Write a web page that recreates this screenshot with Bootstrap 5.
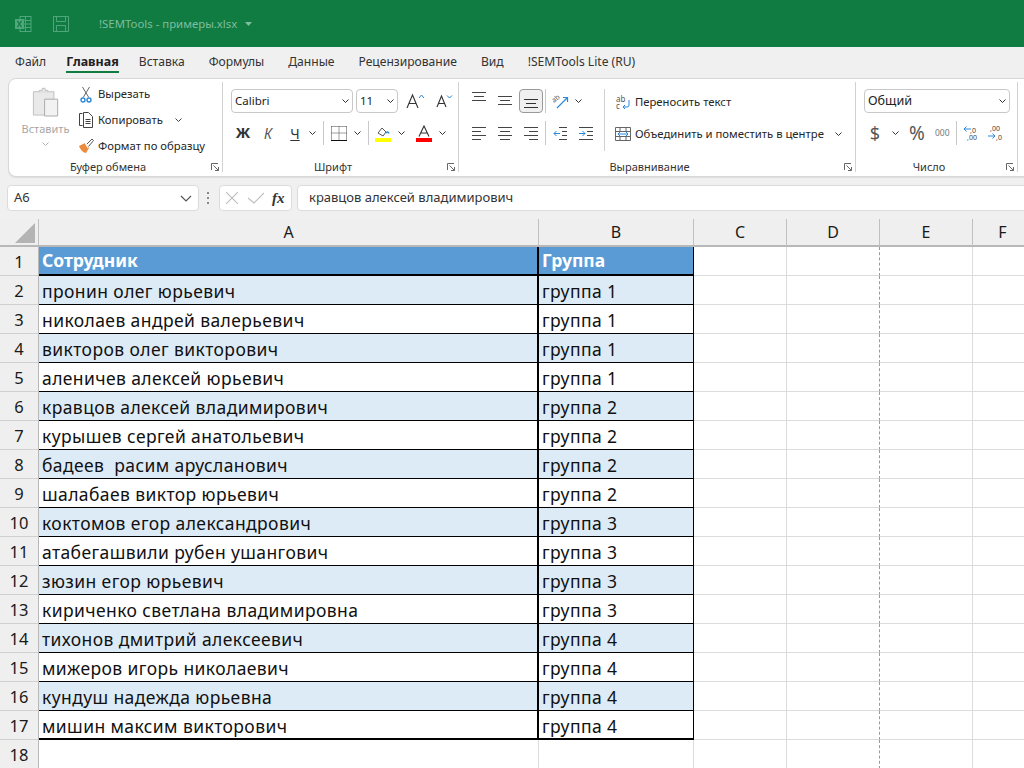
<!DOCTYPE html>
<html lang="ru">
<head>
<meta charset="utf-8">
<title>!SEMTools - примеры.xlsx</title>
<link href="https://cdn.jsdelivr.net/npm/bootstrap@5.3.0/dist/css/bootstrap.min.css" rel="stylesheet">
<style>
html,body{height:768px;overflow:hidden;background:#f0f0f0;margin:0}
body{font-family:"Noto Sans","Liberation Sans",sans-serif;font-size:11.5px;color:#262626;width:1024px}
svg{display:block;flex:none}
.xl-title{height:47px;background:#107c41;color:#7fbda0;padding-left:15px;font-size:11.4px}
.xl-tabs{height:31px;padding-left:15px;gap:21px;font-size:12.1px;color:#333}
.xl-tab{height:26px;line-height:30px;white-space:nowrap}
.xl-tab-far{margin-left:3px}
.xl-tab-on{font-weight:700;font-size:12.5px;color:#222;border-bottom:2px solid #107c41;margin:0 -1px -1px -1px}
.xl-ribbon{height:99px;width:1040px;margin-left:8px;background:#fff;border:1px solid #d8d8d8;border-radius:8px 0 0 8px;box-shadow:0 1px 1px #ddd}
.xl-group{position:relative;height:90px;margin-top:3px;border-right:1px solid #d2d2d2;flex:none}
.xl-label{position:absolute;left:0;right:15px;bottom:-2px;text-align:center;font-size:11px;line-height:14px;color:#333}
.xl-launch{position:absolute;right:3px;bottom:1px}
.xl-rowbtn{height:26px;white-space:nowrap;font-size:11.3px}
.xl-combo{height:24px;border:1px solid #c8c8c8;border-radius:4px;background:#fff;padding:0 3px;font-size:11.5px;color:#222}
.xl-combo-wide{font-size:12.6px}
.xl-sep{width:1px;height:24px;background:#c8c8c8;flex:none}
.xl-faint{color:#a6a6a6}
.xl-fbar{height:42px;padding:8px 0 0 7px;gap:6px}
.xl-box{height:26px;background:#fff;border:1px solid #dcdcdc;border-radius:4px;font-size:13px;color:#333}
.xl-sheet{display:grid;grid-template-columns:39px 500px 155px 93px 93px 93px 60px;grid-template-rows:28px;grid-auto-rows:29px;height:550px;background:#fff;font-size:17.500px;color:#111;letter-spacing:.4px}
.xl-h{background:#efefef;border-right:1px solid #c0c0c0;border-bottom:2px solid #b8b8b8;display:flex;align-items:center;justify-content:center;font-size:16px;color:#1a1a1a;letter-spacing:0}
.xl-n{background:#efefef;border-right:1px solid #b8b8b8;border-bottom:1px solid #d0d0d0;display:flex;align-items:center;justify-content:center;font-size:16.500px;color:#1a1a1a;padding-top:2px;letter-spacing:0}
.xl-c{border-right:1px solid #dcdcdc;border-bottom:1px solid #dcdcdc;padding:3px 0 0 3px;white-space:nowrap;line-height:24px;overflow:hidden}
.xl-d{border-right:1px dashed #9a9a9a}
.xl-a{border-right:2px solid #000;border-bottom:1px solid #000}
.xl-b{border-right:1px solid #000;border-bottom:1px solid #000}
.xl-s{background:#ddebf7}
.xl-top{background:#5b9bd5;color:#fff;font-weight:700;border-bottom:2px solid #000;line-height:22px;padding-top:2px;letter-spacing:0}
.xl-last{border-bottom:2px solid #000}
.xl-wrapcol{width:15px;height:16px;margin-right:4px;line-height:7px;font-size:8px;color:#555;position:relative;padding-top:1px}
.xl-wrapcol svg{position:absolute;left:0;top:0}
.xl-shift{padding-top:1px}
</style>
</head>
<body>
<div class="xl-title d-flex align-items-center">
  <svg width="17" height="16" viewBox="0 0 17 16" fill="none"><rect x="5" y=".5" width="11" height="15" fill="none" stroke="#4fa67c"/><path d="M5 4.500h11M5 8h11M5 11.500h11M10.500 .5v15" stroke="#4fa67c"/><rect y="3" width="9" height="10" fill="#4fa67c"/><path d="M2.500 5l4 6M6.500 5l-4 6" stroke="#107c41" stroke-width="1.300"/></svg>
  <svg style="margin-left:21px" width="16" height="16" viewBox="0 0 16 16" fill="none" stroke="#4fa67c"><path d="M.5.500h15v15H.5zM3.500.5v5h9v-5M3.500 15.500v-6h9v6"/></svg>
  <span style="margin-left:30px">!SEMTools - примеры.xlsx</span>
  <svg class="ms-2" width="7" height="4" viewBox="0 0 7 4"><path d="M0 0h7L3.500 4z" fill="#7fbda0"/></svg>
</div>
<div class="xl-tabs d-flex">
  <div class="xl-tab">Файл</div><div class="xl-tab xl-tab-on">Главная</div><div class="xl-tab">Вставка</div><div class="xl-tab xl-tab-far">Формулы</div><div class="xl-tab xl-tab-far">Данные</div><div class="xl-tab xl-tab-far">Рецензирование</div><div class="xl-tab xl-tab-far">Вид</div><div class="xl-tab xl-tab-far">!SEMTools Lite (RU)</div>
</div>
<div class="xl-ribbon d-flex">
  <div class="xl-group d-flex" style="width:214px">
    <div class="d-flex flex-column align-items-center xl-faint" style="width:69px;padding:5px 0 0 4px;font-size:11px">
      <svg width="28" height="30" viewBox="0 0 30 31" fill="none"><path d="M1.500 4.500h22v25h-22z" fill="#e9e9e9" stroke="#bdbdbd"/><path d="M8 4.500V3h3V.8h3V3h3v1.500" fill="#e9e9e9" stroke="#bdbdbd"/><path d="M13.500 12.500h14v18h-14z" fill="#f2f2f2" stroke="#a8a8a8"/></svg>
      <div style="margin-top:4px;line-height:16px">Вставить</div>
      <svg style="margin-top:5px" width="7" height="4" viewBox="0 0 7 4" fill="none" stroke="#b0b0b0"><path d="M.5.500l3 3 3-3"/></svg>
    </div>
    <div class="d-flex flex-column" style="margin-top:-1px">
      <div class="xl-rowbtn d-flex align-items-center"><svg width="12" height="17" style="margin:0 6px 0 2px" viewBox="0 0 12 17" fill="none"><path d="M2.500 1l6 10M9.500 1l-6 10" stroke="#666"/><circle cx="3" cy="14" r="2" stroke="#2b88d8" stroke-width="1.400"/><circle cx="9" cy="14" r="2" stroke="#2b88d8" stroke-width="1.400"/></svg>Вырезать</div>
      <div class="xl-rowbtn d-flex align-items-center"><svg width="16" height="16" style="margin-right:4px" viewBox="0 0 16 16" fill="none" stroke="#444"><path d="M4.500 1.500h-3v12h3M5.500 .5h5l4 4v11h-9zM7.500 7.500h5M7.500 9.500h5M7.500 11.500h5"/></svg>Копировать<svg style="margin-left:12px" width="7" height="4" viewBox="0 0 7 4" fill="none" stroke="#444"><path d="M.5.500l3 3 3-3"/></svg></div>
      <div class="xl-rowbtn d-flex align-items-center"><svg width="16" height="16" style="margin-right:4px" viewBox="0 0 16 16" fill="none"><path d="M1 8l6-3 4 5-3 5C5 15 2 11 1 8z" fill="#ed8b3d"/><path d="M7 5l3 5" stroke="#fff"/><path d="M9 6l5-5 1.500 1.500-5 6" fill="#fff" stroke="#555"/></svg>Формат по образцу</div>
    </div>
    <div class="xl-label">Буфер обмена</div>
    <svg class="xl-launch" width="8" height="8" viewBox="0 0 8 8" fill="none" stroke="#666"><path d="M.5 7V.5H7M2.500 2.500l5 5M7.500 4v3.500H4"/></svg>
  </div>
  <div class="xl-group" style="width:236px;padding:7px 0 0 8px">
    <div class="d-flex align-items-center" style="gap:3px">
      <div class="xl-combo d-flex align-items-center justify-content-between" style="width:122px">Calibri<svg width="7" height="4" viewBox="0 0 7 4" fill="none" stroke="#333"><path d="M.5.500l3 3 3-3"/></svg></div>
      <div class="xl-combo d-flex align-items-center justify-content-between" style="width:42px">11<svg width="7" height="4" viewBox="0 0 7 4" fill="none" stroke="#333"><path d="M.5.500l3 3 3-3"/></svg></div>
      <svg width="20" height="16" style="margin-left:5px" viewBox="0 0 20 16" fill="none"><path d="M1 15L6.500 2 12 15M3 10.500h7" stroke="#333" stroke-width="1.100"/><path d="M13 5l2.500-3L18 5" stroke="#2b88d8"/></svg>
      <svg width="18" height="14" style="margin-left:7px" viewBox="0 0 18 14" fill="none"><path d="M1 13L5.500 2 10 13M2.500 9.500h6" stroke="#333" stroke-width="1.100"/><path d="M11 1.500l2.500 2.500L16 1.500" stroke="#2b88d8"/></svg>
    </div>
    <div class="d-flex align-items-center" style="margin-top:8px;height:24px;font-size:14px;color:#333">
      <b style="width:24px;text-align:center;font-size:14.5px">Ж</b>
      <i style="width:26px;text-align:center;color:#555">К</i>
      <span style="width:28px;text-align:center;text-decoration:underline">Ч</span>
      <svg width="7" height="4" viewBox="0 0 7 4" fill="none" stroke="#333"><path d="M.5.500l3 3 3-3"/></svg>
      <div class="xl-sep" style="margin:0 7px"></div>
      <svg width="16" height="15" viewBox="0 0 16 15" fill="none"><path d="M.5.500h15M.5 7h15M.5.500v13M8 .5v13M15.500 .5v13" stroke="#444" stroke-dasharray="1 1"/><path d="M0 14.500h16" stroke="#111"/></svg>
      <svg style="margin-left:7px" width="7" height="4" viewBox="0 0 7 4" fill="none" stroke="#333"><path d="M.5.500l3 3 3-3"/></svg>
      <div class="xl-sep" style="margin:0 6px 0 7px"></div>
      <div style="width:16px"><svg width="16" height="17" viewBox="0 0 16 17" fill="none"><path d="M3 8l4-5 4 4-3 4z" stroke="#555"/><path d="M11 8c1-1 2-2 3 .5" stroke="#2b88d8" stroke-width="1.500"/><rect y="13" width="16" height="4" fill="#ff0"/></svg></div>
      <svg style="margin-left:7px" width="7" height="4" viewBox="0 0 7 4" fill="none" stroke="#333"><path d="M.5.500l3 3 3-3"/></svg>
      <div style="width:16px;margin-left:11px"><svg width="16" height="17" viewBox="0 0 16 17" fill="none"><path d="M3 11.500L8 1l5 10.500M4.500 8h7" stroke="#333" stroke-width="1.100"/><rect y="13" width="16" height="4" fill="#f00"/></svg></div>
      <svg style="margin-left:7px" width="7" height="4" viewBox="0 0 7 4" fill="none" stroke="#333"><path d="M.5.500l3 3 3-3"/></svg>
    </div>
    <div class="xl-label">Шрифт</div>
    <svg class="xl-launch" width="8" height="8" viewBox="0 0 8 8" fill="none" stroke="#666"><path d="M.5 7V.5H7M2.500 2.500l5 5M7.500 4v3.500H4"/></svg>
  </div>
  <div class="xl-group d-flex" style="width:397px;padding:7px 0 0 13px">
    <div style="width:132px">
      <div class="d-flex align-items-center" style="height:24px">
        <svg width="14" height="10" viewBox="0 0 14 10" fill="none" stroke="#444" style="margin-top:-8px"><path d="M0 .5h14M2 4.500h10M0 8.500h14"/></svg>
        <svg width="14" height="10" style="margin-left:12px" viewBox="0 0 14 10" fill="none" stroke="#444"><path d="M0 .5h14M2 4.500h10M0 8.500h14"/></svg>
        <div class="d-flex align-items-center justify-content-center" style="width:24px;height:24px;margin-left:7px;background:#f0f0f0;border:1px solid #999;border-radius:4px"><svg width="14" height="10" viewBox="0 0 14 10" fill="none" stroke="#333" style="margin-top:5px"><path d="M0 .5h14M2 4.500h10M0 8.500h14"/></svg></div>
        <div class="xl-sep" style="margin:0 6px 0 2px"></div>
        <svg width="18" height="18" viewBox="0 0 18 18" fill="none"><text transform="translate(2 11) rotate(-40)" font-size="7" fill="#555">ab</text><path d="M5 16L15 6M11 5.500h4.500V10" stroke="#2b88d8" stroke-width="1.200"/></svg>
        <svg style="margin-left:5px" width="7" height="4" viewBox="0 0 7 4" fill="none" stroke="#333"><path d="M.5.500l3 3 3-3"/></svg>
      </div>
      <div class="d-flex align-items-center" style="height:24px;margin-top:8px">
        <svg width="14" height="14" viewBox="0 0 14 14" fill="none" stroke="#444"><path d="M0 1.500h14M0 5.500h9M0 9.500h14M0 13.500h9"/></svg>
        <svg width="14" height="14" style="margin-left:12px" viewBox="0 0 14 14" fill="none" stroke="#444"><path d="M0 1.500h14M2 5.500h10M0 9.500h14M2 13.500h10"/></svg>
        <svg width="14" height="14" style="margin-left:12px" viewBox="0 0 14 14" fill="none" stroke="#444"><path d="M0 1.500h14M5 5.500h9M0 9.500h14M5 13.500h9"/></svg>
        <div class="xl-sep" style="margin:0 7px 0 7px"></div>
        <svg width="14" height="14" viewBox="0 0 14 14" fill="none"><path d="M6 1.500h8M9 5.500h5M9 9.500h5M6 13.500h8" stroke="#444"/><path d="M7 7.500H1M3.500 5l-2.500 2.500L3.500 10" stroke="#2b88d8"/></svg>
        <svg width="14" height="14" style="margin-left:12px" viewBox="0 0 14 14" fill="none"><path d="M0 1.500h14M8 5.500h6M8 9.500h6M0 13.500h14" stroke="#444"/><path d="M0 7.500h6M3.500 5L6 7.500 3.500 10" stroke="#2b88d8"/></svg>
      </div>
    </div>
    <div style="width:1px;height:62px;background:#d2d2d2"></div>
    <div style="margin-left:11px" class="xl-shift">
      <div class="xl-rowbtn d-flex align-items-center" style="height:24px"><div class="xl-wrapcol">ab<br>c<svg width="15" height="16" viewBox="0 0 15 16" fill="none"><path d="M13 6v5a2 2 0 0 1-2 2H7M9 11l-2 2 2 2" stroke="#2b88d8"/></svg></div>Переносить текст</div>
      <div class="xl-rowbtn d-flex align-items-center" style="height:24px;margin-top:8px;margin-left:-1px"><svg width="16" height="16" style="margin-right:4px" viewBox="0 0 16 16" fill="none"><path d="M.5 1.500h15v13H.5zM.5 5.500h15M.5 10.500h15M5 1.500v4M11 1.500v4M5 10.500v4M11 10.500v4" stroke="#666"/><path d="M3 8h10M5 6l-2 2 2 2M11 6l2 2-2 2" stroke="#2b88d8"/></svg>Объединить и поместить в центре<svg style="margin-left:11px" width="7" height="4" viewBox="0 0 7 4" fill="none" stroke="#333"><path d="M.5.500l3 3 3-3"/></svg></div>
    </div>
    <div class="xl-label">Выравнивание</div>
    <svg class="xl-launch" width="8" height="8" viewBox="0 0 8 8" fill="none" stroke="#666"><path d="M.5 7V.5H7M2.500 2.500l5 5M7.500 4v3.500H4"/></svg>
  </div>
  <div class="xl-group" style="width:162px;padding:7px 0 0 8px">
    <div class="xl-combo xl-combo-wide d-flex align-items-center justify-content-between" style="width:146px">Общий<svg width="7" height="4" viewBox="0 0 7 4" fill="none" stroke="#333"><path d="M.5.500l3 3 3-3"/></svg></div>
    <div class="d-flex align-items-center" style="margin-top:8px;height:24px;color:#555">
      <span style="font-size:18px;width:22px;text-align:center">$</span>
      <svg style="margin-left:6px" width="7" height="4" viewBox="0 0 7 4" fill="none" stroke="#333"><path d="M.5.500l3 3 3-3"/></svg>
      <span style="font-size:19px;width:22px;text-align:center;margin-left:7px">%</span>
      <span style="font-size:8.5px;margin-left:7px;color:#777">000</span>
      <div class="xl-sep" style="margin:0 6px"></div>
      <svg width="16" height="16" viewBox="0 0 16 16" fill="none"><path d="M8 4H1M3.500 1.500L1 4l2.500 2.500" stroke="#2b88d8"/><text x="7" y="8" font-size="7" fill="#444">,0</text><text x="4" y="15" font-size="7" fill="#444">,00</text></svg>
      <svg style="margin-left:8px" width="16" height="16" viewBox="0 0 16 16" fill="none"><path d="M1 11h7M5.500 8.500L8 11l-2.500 2.500" stroke="#2b88d8"/><text x="3" y="6" font-size="7" fill="#444">,00</text><text x="9" y="15" font-size="7" fill="#444">,0</text></svg>
    </div>
    <div class="xl-label">Число</div>
    <svg class="xl-launch" width="8" height="8" viewBox="0 0 8 8" fill="none" stroke="#666"><path d="M.5 7V.5H7M2.500 2.500l5 5M7.500 4v3.500H4"/></svg>
  </div>
</div>
<div class="xl-fbar d-flex">
  <div class="xl-box d-flex align-items-center justify-content-between" style="width:192px;padding:0 6px">А6<svg width="12" height="7" viewBox="0 0 12 7" fill="none" stroke="#555" stroke-width="1.200"><path d="M1 1l5 5 5-5"/></svg></div>
  <svg width="3" height="12" style="margin:7px 0 0 2px" viewBox="0 0 3 12" fill="#888"><rect width="2" height="2"/><rect y="5" width="2" height="2"/><rect y="10" width="2" height="2"/></svg>
  <div class="xl-box d-flex align-items-center" style="width:73px;padding:0 6px;margin-left:3px">
    <svg width="12" height="12" viewBox="0 0 12 12" fill="none" stroke="#bdbdbd" stroke-width="1.100"><path d="M0 0l12 12M12 0L0 12"/></svg>
    <svg width="16" height="12" style="margin-left:10px" viewBox="0 0 16 12" fill="none" stroke="#bdbdbd" stroke-width="1.100"><path d="M0 6l6 5L16 1"/></svg>
    <i style="font-family:'Liberation Serif',serif;font-size:15px;font-weight:700;margin-left:8px;color:#333">fx</i>
  </div>
  <div class="xl-box flex-grow-1 d-flex align-items-center" style="padding-left:11px;margin-left:-1px;margin-right:-10px">кравцов алексей владимирович</div>
</div>
<div class="xl-sheet">
  <div class="xl-h"><svg width="20" height="20" style="margin:1px 0 0 12px" viewBox="0 0 20 20"><path d="M20 0v20H0z" fill="#b4b4b4"/></svg></div><div class="xl-h">A</div><div class="xl-h">B</div><div class="xl-h">C</div><div class="xl-h">D</div><div class="xl-h">E</div><div class="xl-h">F</div>
  <div class="xl-n">1</div><div class="xl-c xl-a xl-top">Сотрудник</div><div class="xl-c xl-b xl-top">Группа</div><div class="xl-c"></div><div class="xl-c xl-d"></div><div class="xl-c"></div><div class="xl-c"></div>
  <div class="xl-n">2</div><div class="xl-c xl-a xl-s">пронин олег юрьевич</div><div class="xl-c xl-b xl-s">группа 1</div><div class="xl-c"></div><div class="xl-c xl-d"></div><div class="xl-c"></div><div class="xl-c"></div>
  <div class="xl-n">3</div><div class="xl-c xl-a">николаев андрей валерьевич</div><div class="xl-c xl-b">группа 1</div><div class="xl-c"></div><div class="xl-c xl-d"></div><div class="xl-c"></div><div class="xl-c"></div>
  <div class="xl-n">4</div><div class="xl-c xl-a xl-s">викторов олег викторович</div><div class="xl-c xl-b xl-s">группа 1</div><div class="xl-c"></div><div class="xl-c xl-d"></div><div class="xl-c"></div><div class="xl-c"></div>
  <div class="xl-n">5</div><div class="xl-c xl-a">аленичев алексей юрьевич</div><div class="xl-c xl-b">группа 1</div><div class="xl-c"></div><div class="xl-c xl-d"></div><div class="xl-c"></div><div class="xl-c"></div>
  <div class="xl-n">6</div><div class="xl-c xl-a xl-s">кравцов алексей владимирович</div><div class="xl-c xl-b xl-s">группа 2</div><div class="xl-c"></div><div class="xl-c xl-d"></div><div class="xl-c"></div><div class="xl-c"></div>
  <div class="xl-n">7</div><div class="xl-c xl-a">курышев сергей анатольевич</div><div class="xl-c xl-b">группа 2</div><div class="xl-c"></div><div class="xl-c xl-d"></div><div class="xl-c"></div><div class="xl-c"></div>
  <div class="xl-n">8</div><div class="xl-c xl-a xl-s">бадеев&nbsp; расим арусланович</div><div class="xl-c xl-b xl-s">группа 2</div><div class="xl-c"></div><div class="xl-c xl-d"></div><div class="xl-c"></div><div class="xl-c"></div>
  <div class="xl-n">9</div><div class="xl-c xl-a">шалабаев виктор юрьевич</div><div class="xl-c xl-b">группа 2</div><div class="xl-c"></div><div class="xl-c xl-d"></div><div class="xl-c"></div><div class="xl-c"></div>
  <div class="xl-n">10</div><div class="xl-c xl-a xl-s">коктомов егор александрович</div><div class="xl-c xl-b xl-s">группа 3</div><div class="xl-c"></div><div class="xl-c xl-d"></div><div class="xl-c"></div><div class="xl-c"></div>
  <div class="xl-n">11</div><div class="xl-c xl-a">атабегашвили рубен ушангович</div><div class="xl-c xl-b">группа 3</div><div class="xl-c"></div><div class="xl-c xl-d"></div><div class="xl-c"></div><div class="xl-c"></div>
  <div class="xl-n">12</div><div class="xl-c xl-a xl-s">зюзин егор юрьевич</div><div class="xl-c xl-b xl-s">группа 3</div><div class="xl-c"></div><div class="xl-c xl-d"></div><div class="xl-c"></div><div class="xl-c"></div>
  <div class="xl-n">13</div><div class="xl-c xl-a">кириченко светлана владимировна</div><div class="xl-c xl-b">группа 3</div><div class="xl-c"></div><div class="xl-c xl-d"></div><div class="xl-c"></div><div class="xl-c"></div>
  <div class="xl-n">14</div><div class="xl-c xl-a xl-s">тихонов дмитрий алексеевич</div><div class="xl-c xl-b xl-s">группа 4</div><div class="xl-c"></div><div class="xl-c xl-d"></div><div class="xl-c"></div><div class="xl-c"></div>
  <div class="xl-n">15</div><div class="xl-c xl-a">мижеров игорь николаевич</div><div class="xl-c xl-b">группа 4</div><div class="xl-c"></div><div class="xl-c xl-d"></div><div class="xl-c"></div><div class="xl-c"></div>
  <div class="xl-n">16</div><div class="xl-c xl-a xl-s">кундуш надежда юрьевна</div><div class="xl-c xl-b xl-s">группа 4</div><div class="xl-c"></div><div class="xl-c xl-d"></div><div class="xl-c"></div><div class="xl-c"></div>
  <div class="xl-n">17</div><div class="xl-c xl-a xl-last">мишин максим викторович</div><div class="xl-c xl-b xl-last">группа 4</div><div class="xl-c"></div><div class="xl-c xl-d"></div><div class="xl-c"></div><div class="xl-c"></div>
  <div class="xl-n">18</div><div class="xl-c"></div><div class="xl-c"></div><div class="xl-c"></div><div class="xl-c xl-d"></div><div class="xl-c"></div><div class="xl-c"></div>
</div>
<script src="https://cdn.jsdelivr.net/npm/bootstrap@5.3.0/dist/js/bootstrap.bundle.min.js"></script>
</body>
</html>
